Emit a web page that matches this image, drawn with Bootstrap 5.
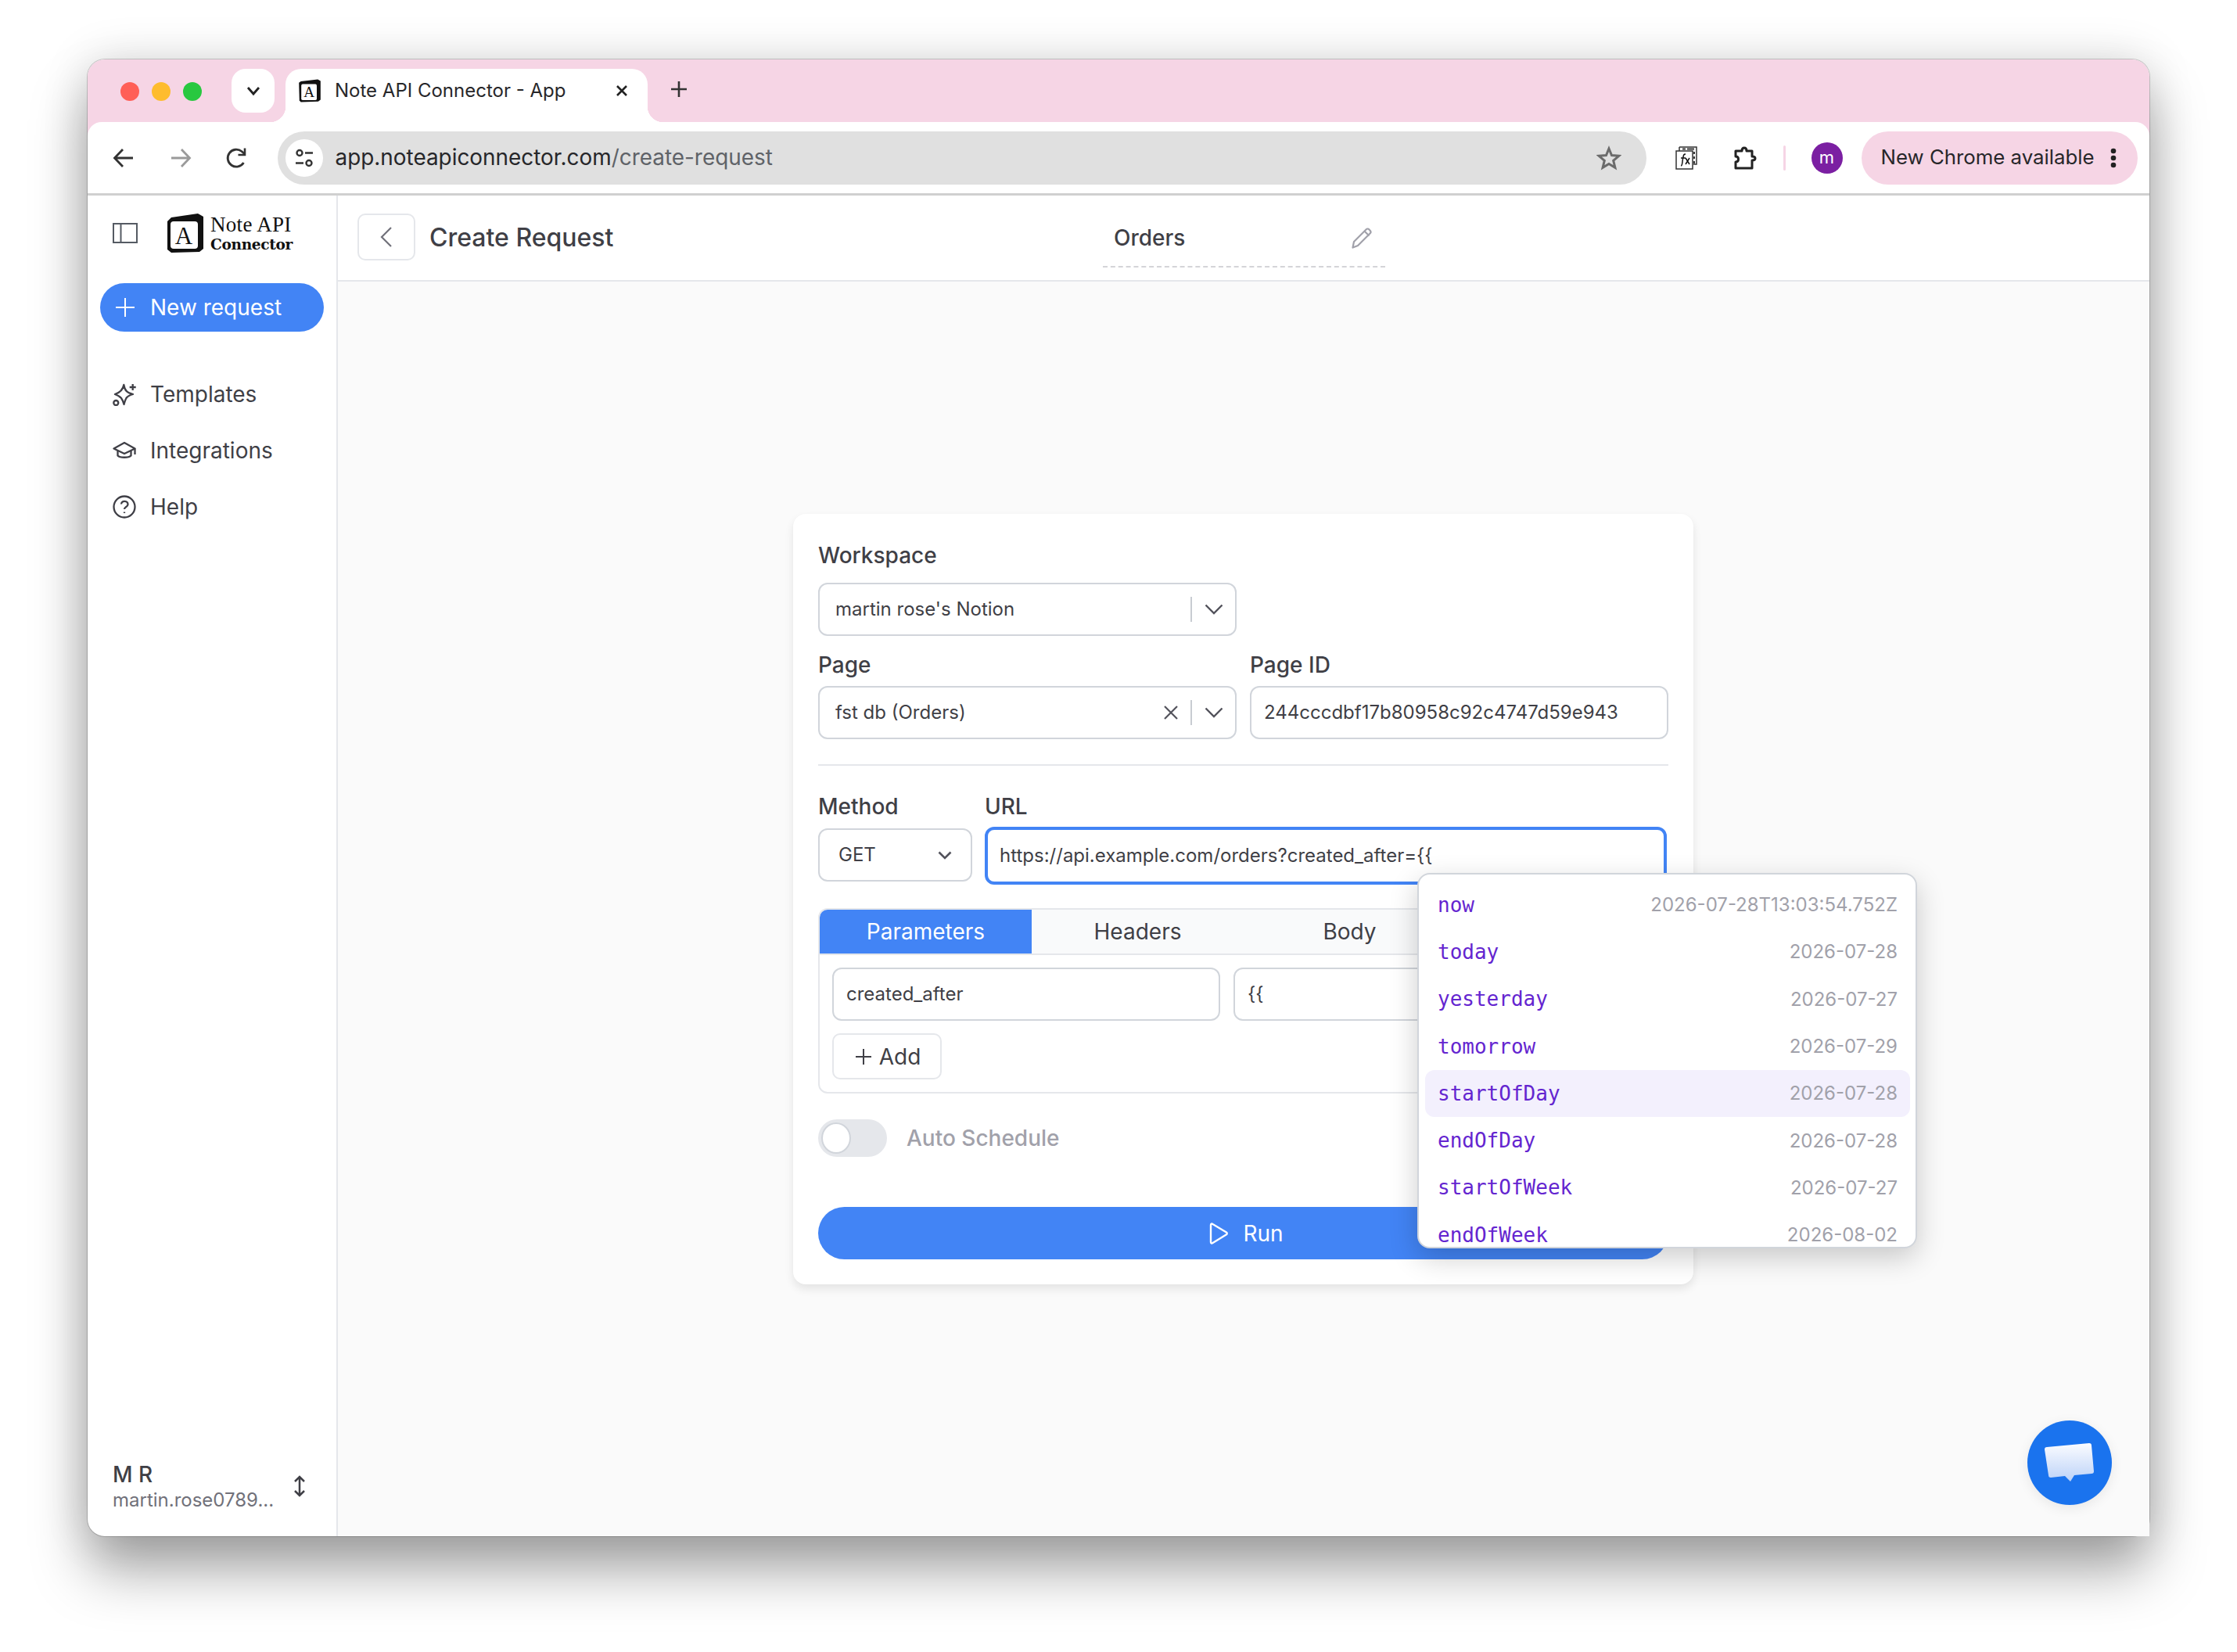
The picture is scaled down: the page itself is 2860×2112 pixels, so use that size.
<!DOCTYPE html>
<html lang="en">
<head>
<meta charset="UTF-8">
<title>Note API Connector - App</title>
<link href="https://cdn.jsdelivr.net/npm/bootstrap@5.3.3/dist/css/bootstrap.min.css" rel="stylesheet">
<style>
    html, body { height: 100%; }
    body { background: #fff; font-family: Inter, "Liberation Sans", sans-serif; color: #3f3f46; overflow: hidden; }
    svg { display: block; flex: none; }

    .desk-window { position: relative; margin: 76px 112px 0; height: 1888px; border-radius: 22px; background: #fff; box-shadow: 0 0 0 1px rgba(0,0,0,.18), 0 45px 70px rgba(0,0,0,.34), 0 0 60px rgba(0,0,0,.14); }

    /* chrome */
    .tab-strip { height: 80px; background: #f6d5e5; padding: 12px 0 0 42px; border-radius: 22px 22px 0 0; }
    .light { width: 24px; height: 24px; border-radius: 50%; margin: 17px 16px 0 0; }
    .tab-search { width: 55px; height: 56px; background: #fff; border-radius: 18px; margin-left: 22px; }
    .tab-open { position: relative; width: 463px; height: 68px; margin-left: 14px; background: #fff; border-radius: 20px 20px 0 0; padding: 0 24px 12px 16px; font-size: 24px; color: #27272a; }
    .tab-open::before, .tab-open::after { content: ""; position: absolute; bottom: 0; width: 20px; height: 20px; }
    .tab-open::before { left: -20px; background: radial-gradient(circle at 0 0, transparent 20px, #fff 20.5px); }
    .tab-open::after { right: -20px; background: radial-gradient(circle at 100% 0, transparent 20px, #fff 20.5px); }
    .tab-title { margin-left: 17px; }
    .tab-plus { margin: 14px 0 0 28px; }

    .tool-wrap { background: #f6d5e5; }
    .tool-bar { height: 94px; background: #fff; border-radius: 18px 18px 0 0; border-bottom: 3px solid #d0d0d0; padding-left: 10px; }
    .tool-btn { width: 72.5px; }
    .omni-box { width: 1750px; height: 68px; background: #e0e0e0; border-radius: 34px; padding: 0 32px 0 10px; margin-left: 15px; font-size: 27.9px; color: #27272a; }
    .omni-chip { width: 48px; height: 48px; background: #fff; border-radius: 50%; margin-right: 16px; }
    .omni-path { color: #5f6368; }
    .fx-icon { margin-left: 37px; }
    .puzzle-icon { margin-left: 44px; }
    .ext-sep { width: 3px; height: 32px; background: #f6d5e5; border-radius: 2px; margin-left: 34px; }
    .avatar-dot { width: 40px; height: 40px; border-radius: 50%; background: #7b1fa2; color: #fff; font-size: 22px; margin: 0 24px 0 33px; }
    .update-pill { width: 353px; height: 68px; border-radius: 34px; background: #f6d5e5; padding: 0 27px 0 25px; font-size: 25.8px; color: #27272a; }

    /* app */
    .app-body { height: 1714px; }
    .side-col { width: 320px; flex: none; border-right: 2px solid #e5e7eb; border-radius: 0 0 0 22px; padding: 23px 16px 0; }
    .logo-row { height: 50px; padding-left: 16px; }
    .logo-mark { margin-left: 37px; }
    .logo-name { margin-left: 8px; line-height: 1; color: #111; }
    .logo-top { font-family: "Liberation Serif", serif; font-size: 27px; height: 27px; letter-spacing: .3px; }
    .logo-sub { font-family: "DejaVu Serif", serif; font-weight: 700; font-size: 18.6px; letter-spacing: -.35px; margin-top: 3px; }
    .new-btn { height: 62px; margin-top: 39px; background: #4284f5; border: 0; border-radius: 31px; color: #fff; font-size: 28px; padding: 0 0 0 20px; gap: 20px; width: 286px; }
    .new-btn:hover { background: #4284f5; color: #fff; }
    .side-nav { margin-top: 44px; }
    .side-link { height: 72px; padding-left: 16px; gap: 18px; font-size: 28px; color: #3f3f46; }
    .side-foot { margin-top: auto; padding: 0 0 30px 16px; }
    .foot-name { font-size: 28px; font-weight: 500; line-height: 34px; }
    .foot-mail { font-size: 24px; color: #71717a; line-height: 32px; }
    .foot-arrows { margin: 18px 0 0 25px; }

    .main-col { background: #fafafa; min-width: 0; }
    .page-head { height: 110px; background: #fff; border-bottom: 2px solid #e5e7eb; padding: 0 0 0 25px; position: relative; }
    .head-back { width: 74px; height: 60px; border: 2px solid #e5e7eb; border-radius: 10px; margin-top: -2px; }
    .head-title { font-size: 32px; font-weight: 500; margin: 0 0 0 18px; color: #3f3f46; }
    .head-name { position: absolute; left: 978px; top: 0; width: 361px; height: 92px; border-bottom: 2px dashed #d4d4d8; padding: 18px 14px 0; font-size: 28px; font-weight: 500; }

    .form-panel { position: relative; width: 1151px; margin: 297px 0 0 582px; background: #fff; border-radius: 16px; padding: 36px 32px 32px; box-shadow: 0 6px 12px rgba(0,0,0,.09), 0 0 2px rgba(0,0,0,.02); }
    .fld-label { font-size: 28px; font-weight: 500; line-height: 34px; color: #3f3f46; }
    .fld-box { height: 68px; border: 2px solid #d1d5db; border-radius: 12px; font-size: 24px; color: #3f3f46; background: #fff; padding: 0 15px 0 20px; }
    .sel-sep { width: 2px; height: 32px; background: #c8ccd2; margin-right: 16px; }
    .sel-x { margin-right: 15px; }
    .two-col { display: grid; grid-template-columns: 535px 535px; column-gap: 17px; }
    .label-gap { margin-bottom: 18px; }
    .row-gap { margin-top: 20px; }
    .box-gap { margin-top: 10px; }
    .rule-line { height: 2px; background: #e5e7eb; margin: 32px 0 35px; }
    .url-box { height: 74px; width: 872px; margin-top: -2px; border: 4px solid #4284f5; border-radius: 12px; font-size: 24px; padding: 0 15px; background: #fff; }
    .method-col { width: 197px; }
    .method-box { padding: 0 24px; }
    .url-row { margin-top: 11px; }
    .pad-tight { padding-left: 16px; }
    .param-tabs { margin-top: 30px; border: 2px solid #e5e7eb; border-radius: 12px; overflow: hidden; height: 237px; }
    .tab-row { height: 58px; background: #f9fafb; border-bottom: 2px solid #e5e7eb; display: grid; grid-template-columns: repeat(4, 271px); font-size: 28px; }
    .tab-on { background: #4284f5; color: #fff; }
    .param-body { padding: 16px; }
    .param-pair { gap: 17px; }
    .param-cell { width: 496px; padding-left: 16px; }
    .add-btn { width: 140px; height: 59px; border: 2px solid #e5e7eb; border-radius: 10px; margin-top: 16px; font-size: 28px; color: #3f3f46; background: #fff; padding: 0 0 0 3px; gap: 10px; }
    .switch-row { margin-top: 33px; gap: 25px; font-size: 28px; color: #a1a1aa; font-weight: 500; }
    .switch-track { width: 88px; height: 48px; border-radius: 24px; background: #e5e7eb; padding-left: 4px; }
    .switch-knob { width: 38px; height: 40px; border-radius: 50%; background: #fff; border: 2px solid #d1d5db; }
    .run-btn { width: 100%; height: 67px; margin-top: 64px; background: #4284f5; border: 0; border-radius: 34px; color: #fff; font-size: 28px; gap: 18px; padding: 0 0 0 7px; }
    .run-btn:hover { background: #4284f5; color: #fff; }

    .var-menu { position: absolute; left: 798px; top: 459px; width: 639px; height: 480px; background: #fff; border: 2px solid #d1d5db; border-radius: 16px; overflow: hidden; padding: 9px 7px 0 8px; box-shadow: 0 12px 36px rgba(0,0,0,.2); }
    .var-row { height: 60.3px; padding: 0 16px; border-radius: 12px; }
    .var-row.is-on { background: #f3f0fd; }
    .var-name { font-family: "DejaVu Sans Mono", monospace; font-size: 26px; color: #6425d0; }
    .var-val { font-size: 24px; color: #a1a1aa; }

    .chat-fab { position: absolute; right: 48px; bottom: 40px; width: 108px; height: 108px; border-radius: 50%; background: #1a73ee; box-shadow: 0 4px 16px rgba(0,0,0,.08); }
</style>
</head>
<body>
<div class="desk-window d-flex flex-column">

    <div class="tab-strip d-flex align-items-start">
        <div class="light" style="background:#ff5f57"></div>
        <div class="light" style="background:#febc2e"></div>
        <div class="light" style="background:#28c840"></div>
        <div class="tab-search d-flex align-items-center justify-content-center">
            <svg width="20" height="20" viewBox="0 0 20 20" fill="none" stroke="#222" stroke-width="2.8"><path d="M3 6l7 8 7-8"/></svg>
        </div>
        <div class="tab-open d-flex align-items-center">
            <svg width="30" height="30" viewBox="0 0 48 50"><path d="M5 5 41 1 47 4 47 44 42 48 5 49 2 46 1 8Z" fill="#111"/><rect x="6" y="11" width="33" height="34" rx="3" fill="#fff"/><text x="22.5" y="39" text-anchor="middle" font-family="Liberation Serif" font-size="32" fill="#111">A</text></svg>
            <span class="tab-title flex-grow-1">Note API Connector - App</span>
            <svg width="18" height="18" viewBox="0 0 18 18" stroke="#222" stroke-width="2.6"><path d="M3 3l12 12M15 3 3 15"/></svg>
        </div>
        <svg class="tab-plus" width="24" height="24" viewBox="0 0 24 24" stroke="#333" stroke-width="2.6"><path d="M12 2v20M2 12h20"/></svg>
    </div>

    <div class="tool-wrap">
        <div class="tool-bar d-flex align-items-center">
            <div class="tool-btn d-flex justify-content-center">
                <svg width="28" height="28" viewBox="0 0 28 28" fill="none" stroke="#333" stroke-width="2.8"><path d="M26 14H3M13 3 2.5 14 13 25"/></svg>
            </div>
            <div class="tool-btn d-flex justify-content-center">
                <svg width="28" height="28" viewBox="0 0 28 28" fill="none" stroke="#9a9a9a" stroke-width="2.8"><path d="M2 14h23M15 3l10.5 11L15 25"/></svg>
            </div>
            <div class="tool-btn d-flex justify-content-center">
                <svg width="28" height="28" viewBox="0 0 28 28" fill="none" stroke="#333" stroke-width="2.8"><path d="M22.5 20A11 11 0 1 1 20 5.5L24 9"/><path d="M24 1.5V10h-8.500" stroke-width="2.6"/></svg>
            </div>
            <div class="omni-box d-flex align-items-center">
                <div class="omni-chip d-flex align-items-center justify-content-center">
                    <svg width="26" height="26" viewBox="0 0 26 26" fill="none" stroke="#333" stroke-width="2.400"><circle cx="7" cy="6.500" r="3.500"/><path d="M14 6.500h10M2 19.500h10"/><circle cx="19" cy="19.500" r="3.500"/></svg>
                </div>
                <span class="flex-grow-1">app.noteapiconnector.com<span class="omni-path">/create-request</span></span>
                <svg width="32" height="32" viewBox="0 0 32 32" fill="none" stroke="#6b6b6b" stroke-width="3"><path d="M16 4l3.500 8.600 9.300.7-7.100 6 2.200 9-7.900-4.900-7.900 4.900 2.200-9-7.100-6 9.300-.7Z"/></svg>
            </div>
            <svg class="fx-icon" width="28" height="30" viewBox="0 0 28 30" fill="none" stroke="#333" stroke-width="1.500"><path d="M5 1h22v22h-4M5 1v5M1 6h21v23H1Z"/><path d="M9 3.500h4M15 3.500h9M24 7v3M24 13v3M24 19v3" stroke-width="2"/><path d="M7 25c2 0 1.500-3 2.500-9s1.500-6 3.500-6M7 15h6M13 15l5 8M18 15l-5 8" stroke="#111"/></svg>
            <svg class="puzzle-icon" width="32" height="32" viewBox="0 0 32 32" fill="none" stroke="#222" stroke-width="3"><path d="M5 7h8c0-1.500.5-4 3-4s3 2.500 3 4h7v7c1.500 0 4 .5 4 2.500S27.500 19 26 19v10H5v-8c2 0 3.500-1 3.500-3.500S7 14 5 14Z" stroke-linejoin="round"/></svg>
            <div class="ext-sep"></div>
            <div class="avatar-dot d-flex align-items-center justify-content-center">m</div>
            <div class="update-pill d-flex align-items-center justify-content-between">
                <span>New Chrome available</span>
                <svg width="8" height="26" viewBox="0 0 8 26" fill="#222"><circle cx="4" cy="4" r="3.300"/><circle cx="4" cy="13" r="3.300"/><circle cx="4" cy="22" r="3.300"/></svg>
            </div>
        </div>
    </div>

    <div class="app-body d-flex">
        <aside class="side-col d-flex flex-column">
            <div class="logo-row d-flex align-items-center">
                <svg width="32" height="26" viewBox="0 0 32 26" fill="none" stroke="#555b63" stroke-width="2"><rect x="1" y="1" width="30" height="24"/><path d="M10.500 1v24"/></svg>
                <svg class="logo-mark" width="48" height="50" viewBox="0 0 48 50"><path d="M6 5 40 0 47 4 47 45 42 49 6 50 1 46 1 10Z" fill="#111"/><rect x="5" y="10" width="35" height="35" rx="4" fill="#fff"/><text x="22" y="39" text-anchor="middle" font-family="Liberation Serif" font-size="31" fill="#111">A</text></svg>
                <div class="logo-name">
                    <div class="logo-top">Note API</div>
                    <div class="logo-sub">Connector</div>
                </div>
            </div>
            <button class="btn new-btn d-flex align-items-center" type="button">
                <svg width="24" height="24" viewBox="0 0 24 24" stroke="#fff" stroke-width="2"><path d="M12 0v24M0 12h24"/></svg>
                New request
            </button>
            <nav class="side-nav nav flex-column">
                <a class="side-link d-flex align-items-center text-decoration-none" href="#">
                    <svg width="30" height="30" viewBox="0 0 30 30" fill="none" stroke="#3f3f46" stroke-width="2.300" stroke-linejoin="round"><path d="M14.300 3C15.500 10 18 13 26 15 18 17 16.500 20 14.500 28 12.500 21 11 18 3 15 9 13 13 10 14.300 3Z"/><path d="M25.700 2v8M21.700 6h8"/><circle cx="4.300" cy="26" r="3" fill="#fff"/></svg>
                    Templates
                </a>
                <a class="side-link d-flex align-items-center text-decoration-none" href="#">
                    <svg width="30" height="24" viewBox="0 0 30 24" fill="none" stroke="#3f3f46" stroke-width="2.300" stroke-linejoin="round"><path d="M15 2 1.500 9.500 15 16l13.500-6.500Z"/><path d="M6.500 12v6.500c3 3 14 3 17 0V12"/><path d="M28.500 9.500V17"/></svg>
                    Integrations
                </a>
                <a class="side-link d-flex align-items-center text-decoration-none" href="#">
                    <svg width="30" height="30" viewBox="0 0 30 30" fill="none" stroke="#3f3f46" stroke-width="2.300"><circle cx="15" cy="15" r="13.500"/><path d="M11 11.500c.5-5 8.500-5 8.500.5 0 3-4.500 3-4.500 6"/><path d="M15 21.500v1.500"/></svg>
                    Help
                </a>
            </nav>
            <div class="side-foot d-flex">
                <div>
                    <div class="foot-name">M R</div>
                    <div class="foot-mail">martin.rose0789...</div>
                </div>
                <svg class="foot-arrows" width="16" height="28" viewBox="0 0 16 28" fill="none" stroke="#3f3f46" stroke-width="2.500"><path d="M8 2v24M2 8l6-6 6 6M2 20l6 6 6-6"/></svg>
            </div>
        </aside>

        <main class="main-col flex-grow-1">
            <header class="page-head d-flex align-items-center">
                <div class="head-back d-flex align-items-center justify-content-center">
                    <svg width="16" height="28" viewBox="0 0 16 28" fill="none" stroke="#71717a" stroke-width="2.200"><path d="M14 2 2 14l12 12"/></svg>
                </div>
                <div class="head-title">Create Request</div>
                <div class="head-name d-flex align-items-center justify-content-between">
                    <span>Orders</span>
                    <svg width="30" height="30" viewBox="0 0 30 30" fill="none" stroke="#a1a1aa" stroke-width="2.200" stroke-linejoin="round"><path d="M4 20 20 4c2-2 7 3 5 5L9 25l-6.500 2.500Z"/><path d="M17.500 6.500l6 6"/></svg>
                </div>
            </header>

            <section class="form-panel">
                <div class="fld-label label-gap">Workspace</div>
                <div class="two-col">
                    <div class="fld-box d-flex align-items-center">
                        <span class="flex-grow-1">martin rose's Notion</span>
                        <div class="sel-sep"></div>
                        <svg width="24" height="14" viewBox="0 0 24 14" fill="none" stroke="#52525b" stroke-width="2.400"><path d="M1.500 1.500 12 12 22.500 1.500"/></svg>
                    </div>
                </div>
                <div class="two-col row-gap">
                    <div class="fld-label">Page</div>
                    <div class="fld-label">Page ID</div>
                    <div class="fld-box box-gap d-flex align-items-center">
                        <span class="flex-grow-1">fst db (Orders)</span>
                        <svg class="sel-x" width="20" height="20" viewBox="0 0 20 20" stroke="#52525b" stroke-width="2.200"><path d="M2 2l16 16M18 2 2 18"/></svg>
                        <div class="sel-sep"></div>
                        <svg width="24" height="14" viewBox="0 0 24 14" fill="none" stroke="#52525b" stroke-width="2.400"><path d="M1.500 1.500 12 12 22.500 1.500"/></svg>
                    </div>
                    <div class="fld-box box-gap pad-tight d-flex align-items-center">244cccdbf17b80958c92c4747d59e943</div>
                </div>
                <div class="rule-line"></div>
                <div class="d-flex gap-3 fld-label">
                    <div class="method-col">Method</div>
                    <div>URL</div>
                </div>
                <div class="d-flex gap-3 url-row">
                    <div class="fld-box method-col method-box d-flex align-items-center justify-content-between">
                        GET
                        <svg width="18" height="11" viewBox="0 0 18 11" fill="none" stroke="#52525b" stroke-width="2.600"><path d="M1.500 1.500 9 9l7.500-7.500"/></svg>
                    </div>
                    <div class="url-box d-flex align-items-center">https://api.example.com/orders?created_after={{</div>
                </div>

                <div class="param-tabs">
                    <div class="tab-row">
                        <div class="tab-on d-flex align-items-center justify-content-center">Parameters</div>
                        <div class="d-flex align-items-center justify-content-center">Headers</div>
                        <div class="d-flex align-items-center justify-content-center">Body</div>
                        <div></div>
                    </div>
                    <div class="param-body">
                        <div class="d-flex param-pair">
                            <div class="fld-box param-cell d-flex align-items-center">created_after</div>
                            <div class="fld-box param-cell d-flex align-items-center">{{</div>
                        </div>
                        <button class="btn add-btn d-flex align-items-center justify-content-center" type="button">
                            <svg width="20" height="20" viewBox="0 0 20 20" stroke="#3f3f46" stroke-width="2"><path d="M10 0v20M0 10h20"/></svg>
                            Add
                        </button>
                    </div>
                </div>

                <div class="switch-row d-flex align-items-center">
                    <div class="switch-track d-flex align-items-center"><div class="switch-knob"></div></div>
                    Auto Schedule
                </div>

                <button class="btn run-btn d-flex align-items-center justify-content-center" type="button">
                    <svg width="26" height="28" viewBox="0 0 26 28" fill="none" stroke="#fff" stroke-width="2.400" stroke-linejoin="round"><path d="M3 3c0-1.500 1-2 2.500-1L23 12.500c1 .8 1 2 0 2.800L5.500 26c-1.500 1-2.500.5-2.500-1Z"/></svg>
                    Run
                </button>

                <div class="var-menu">
                    <div class="var-row d-flex align-items-center justify-content-between"><span class="var-name">now</span><span class="var-val">2026-07-28T13:03:54.752Z</span></div>
                    <div class="var-row d-flex align-items-center justify-content-between"><span class="var-name">today</span><span class="var-val">2026-07-28</span></div>
                    <div class="var-row d-flex align-items-center justify-content-between"><span class="var-name">yesterday</span><span class="var-val">2026-07-27</span></div>
                    <div class="var-row d-flex align-items-center justify-content-between"><span class="var-name">tomorrow</span><span class="var-val">2026-07-29</span></div>
                    <div class="var-row is-on d-flex align-items-center justify-content-between"><span class="var-name">startOfDay</span><span class="var-val">2026-07-28</span></div>
                    <div class="var-row d-flex align-items-center justify-content-between"><span class="var-name">endOfDay</span><span class="var-val">2026-07-28</span></div>
                    <div class="var-row d-flex align-items-center justify-content-between"><span class="var-name">startOfWeek</span><span class="var-val">2026-07-27</span></div>
                    <div class="var-row d-flex align-items-center justify-content-between"><span class="var-name">endOfWeek</span><span class="var-val">2026-08-02</span></div>
                </div>
            </section>
        </main>
    </div>

    <div class="chat-fab d-flex align-items-center justify-content-center">
        <svg width="66" height="52" viewBox="0 0 66 52"><defs><linearGradient id="bubbleFill" x1="0" y1="0" x2="0" y2="1"><stop offset="0" stop-color="#fbfcff"/><stop offset="1" stop-color="#bcd2f8"/></linearGradient></defs><path d="M4 6 58 1c2 0 3 1 3 3l3 33c0 2-1 3-3 3l-22 2-5 8-7-7-18 2c-2 0-3-1-3-3L1 9c0-2 1-3 3-3Z" fill="url(#bubbleFill)"/></svg>
    </div>
</div>
</body>
</html>
